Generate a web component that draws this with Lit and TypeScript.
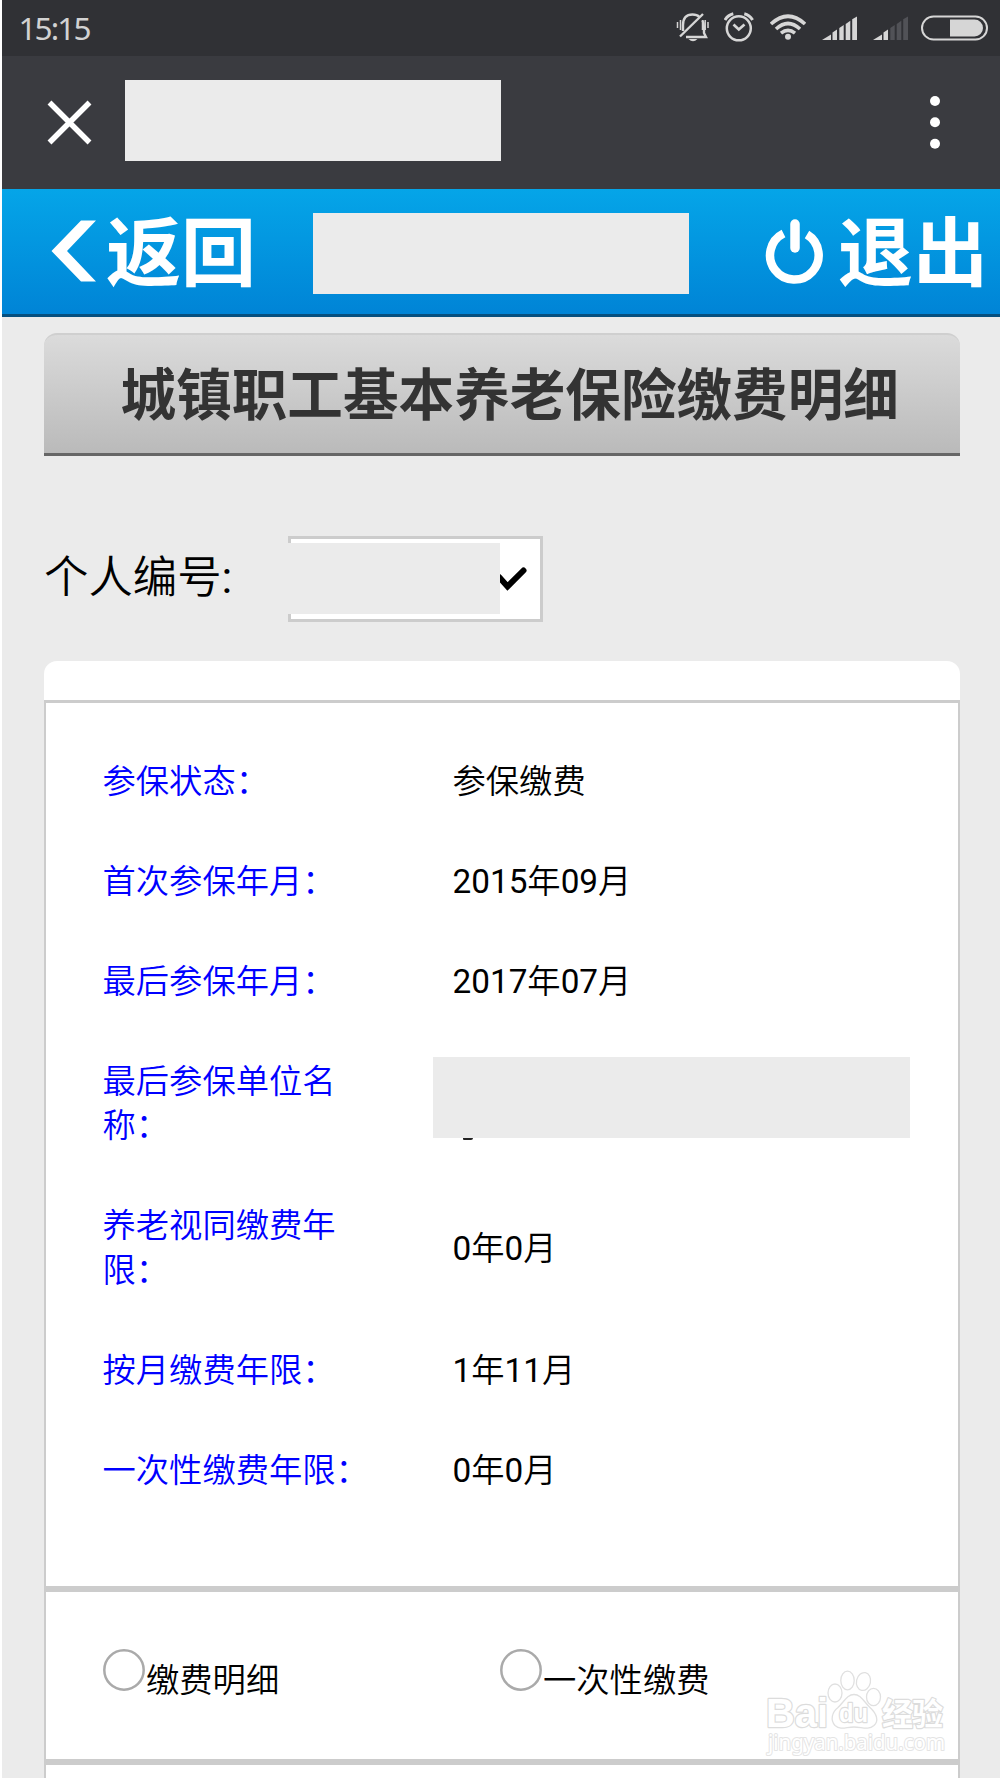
import { LitElement, html, svg, css } from "lit";
import { customElement } from "lit/decorators.js";

type Row = { label: string; value: string; masked?: boolean };

const ROWS: Row[] = [
  { label: "参保状态：", value: "参保缴费" },
  { label: "首次参保年月：", value: "2015年09月" },
  { label: "最后参保年月：", value: "2017年07月" },
  { label: "最后参保单位名称：", value: "", masked: true },
  { label: "养老视同缴费年限：", value: "0年0月" },
  { label: "按月缴费年限：", value: "1年11月" },
  { label: "一次性缴费年限：", value: "0年0月" },
];

// Digits are set one weight heavier than the ideographs around them.
const mixed = (text: string) =>
  text.split(/(\d+)/).filter(Boolean).map((part) => (/\d/.test(part) ? html`<span class="num">${part}</span>` : part));

// Five ascending signal bars; bars past `active` are dimmed.
const signal = (active: number) =>
  ["M0 24L9 18.500V24Z", "M10.500 24V16.500L15 13.500V24Z", "M17.300 24V12L21.700 9V24Z", "M23.700 24V8L28.300 4.700V24Z", "M30.200 24V3.300L35 .500V24Z"].map(
    (d, i) => svg`<path d=${d} fill=${i < active ? "#d6d6d6" : "#515257"}></path>`
  );

@customElement("status-bar")
class StatusBar extends LitElement {
  static styles = css`
    :host { display: flex; align-items: center; height: 55.500px; padding: 0 12px 0 16.500px; background: #303135; color: #d2d2d2; box-sizing: border-box; }
    .time { flex: 1; font: 400 31.500px/55px "Noto Sans", sans-serif; letter-spacing: -1.900px; }
    svg { display: block; flex: none; }
    .mute { margin-right: 15px; }
    .alarm { margin-right: 16px; }
    .wifi { margin-right: 16px; }
    .sig { margin-right: 16px; }
    .sig2 { margin-right: 13px; }
  `;
  render() {
    return html`
      <span class="time">15:15</span>
      <svg class="mute" width="33" height="55" viewBox="676 0 33 55" fill="none" stroke="#d6d6d6" stroke-width="2.400">
        <path d="M683 31V25Q683 14.500 692.500 14.500Q697 14.500 699.500 17M702.500 20.500Q704 23 704 28V33L706 37H686" />
        <path d="M680 36.500L703 14" />
        <path d="M677.500 22V28M680.500 20V30M702.500 20V30M705.200 20V30M708 22V28" stroke-width="1.500" />
        <path d="M688.500 39H697.500Q693 43.500 688.500 39Z" fill="#d6d6d6" stroke="none" />
      </svg>
      <svg class="alarm" width="30" height="55" viewBox="724 0 30 55" fill="none" stroke="#d6d6d6">
        <circle cx="738.800" cy="28.300" r="12" stroke-width="2.500" />
        <path d="M733.500 24.500L738.800 29.500L744.500 24.500" stroke-width="2.700" />
        <path d="M725 20Q728 15 733.300 13.800M752.600 20Q749.600 15 744.300 13.800" stroke-width="3" />
      </svg>
      <svg class="wifi" width="36" height="55" viewBox="770 0 36 55" fill="none" stroke="#d6d6d6" stroke-width="3.600">
        <path d="M771 24Q788 8.500 805 24M776 29Q788 18 800 29M781 33.200Q788 27.500 795 33.200" />
        <circle cx="788" cy="36.800" r="3" fill="#d6d6d6" stroke="none" />
      </svg>
      <svg class="sig" width="35" height="24" viewBox="0 0 35 24">${signal(5)}</svg>
      <svg class="sig2" width="35" height="24" viewBox="0 0 35 24">${signal(2)}</svg>
      <svg width="67" height="26" viewBox="0 0 67 26">
        <rect x="1" y="1.500" width="65" height="23" rx="11.500" fill="none" stroke="#d6d6d6" stroke-width="2" />
        <path d="M29 4.500H53.500A8.500 8.500 0 0 1 53.500 21.500H29Z" fill="#d6d6d6" />
      </svg>
    `;
  }
}

@customElement("baidu-mark")
class BaiduMark extends LitElement {
  static styles = css`
    :host { display: block; }
    svg { display: block; }
    text { paint-order: stroke; fill: #fff; stroke: #dcdcdc; stroke-width: 2.400px; stroke-linejoin: round; font-family: "Liberation Sans", "Noto Sans CJK SC", sans-serif; }
    .brand { font-weight: 700; }
    .url { font-family: "Noto Sans", sans-serif; stroke: #e4e4e4; stroke-width: 2px; }
    .paw { fill: #fff; stroke: #e0e0e0; stroke-width: 1.300; }
  `;
  render() {
    return html`
      <svg width="190" height="94" viewBox="760 1666 190 94">
        <text class="brand" x="766" y="1726.500" font-size="40" textLength="62" lengthAdjust="spacingAndGlyphs">Bai</text>
        <g class="paw">
          <ellipse cx="835" cy="1693" rx="7" ry="9" />
          <ellipse cx="847.500" cy="1680.500" rx="6.700" ry="9.300" />
          <ellipse cx="863.500" cy="1681.500" rx="7" ry="9" transform="rotate(12 863.500 1681.500)" />
          <ellipse cx="873.500" cy="1697" rx="7" ry="8.700" />
          <path d="M854 1694.500C861 1694.500 864 1702 870 1707.500C877 1714 879 1721 874 1725.500C868 1730.500 862 1727 854 1727C846 1727 841 1730.500 835 1725.500C830 1720 832 1712 838 1707.500C844 1702 847 1694.500 854 1694.500Z" />
        </g>
        <text class="brand" x="839" y="1722" font-size="25" textLength="29" lengthAdjust="spacingAndGlyphs">du</text>
        <text class="brand" x="882" y="1724.500" font-size="31" textLength="61">经验</text>
        <text class="url" x="768" y="1750" font-size="21" textLength="177" lengthAdjust="spacingAndGlyphs">jingyan.baidu.com</text>
      </svg>
    `;
  }
}

@customElement("app-root")
class AppRoot extends LitElement {
  static styles = css`
    :host { display: block; height: 1778px; overflow: hidden; padding-left: 2px; background: #fff; box-sizing: border-box; font-family: Roboto, "Noto Sans CJK SC", sans-serif; color: #000; }
    .screen { height: 1778px; overflow: hidden; background: #ebebeb; }
    .mask { background: #ebebeb; flex: none; }
    svg { display: block; flex: none; }
    .titlebar { display: flex; align-items: center; height: 133.500px; padding: 0 60px 0 45px; background: #3a3b40; box-sizing: border-box; }
    .titlebar .mask { width: 376px; height: 81px; margin-left: 33px; margin-top: -3px; }
    .titlebar .more { margin-left: auto; }
    .nav { display: flex; align-items: center; height: 128px; padding: 0 0 0 49px; box-sizing: border-box; background: linear-gradient(#05a5e8, #0084d6); border-bottom: 3px solid #06507f; }
    .nav .mask { width: 376px; height: 81px; margin-top: 4px; }
    .link { display: flex; align-items: center; color: #fff; font: 700 75px/120px "Noto Sans CJK SC", sans-serif; }
    .link span { margin-top: -7px; }
    .back { width: 262px; }
    .back svg { margin-right: 9px; margin-top: -1px; }
    .exit { margin-left: 76px; }
    .exit svg { margin-right: 15px; }
    .heading { display: flex; align-items: center; justify-content: center; margin: 16px 40px 0 41.500px; height: 123px; padding-left: 16px; box-sizing: border-box; border-top: 2px solid #cfcfcf; border-bottom: 3px solid #666; border-radius: 13px 13px 0 0; background: linear-gradient(#dbdbdb, #bababa); color: #333; font: 700 55.600px/80px "Noto Sans CJK SC", sans-serif; }
    .heading span { margin-top: -6px; }
    .person { display: flex; align-items: center; height: 86px; margin: 80px 0 39px 42px; }
    .person label { width: 244px; margin-top: -2px; font: 350 44.400px/60px Roboto, "Noto Sans CJK SC", sans-serif; }
    .colon, .num { font-weight: 400; }
    .select { display: flex; align-items: center; width: 255px; height: 86px; box-sizing: border-box; background: #fff; border: 3px solid #ccc; }
    .select .mask { width: 212px; height: 71px; margin: 0 0 1px -3px; }
    .cap { height: 39px; margin: 0 40px 0 41.500px; background: #fff; border-radius: 13px 13px 0 0; }
    .panel { margin: 0 40px 0 42px; border: 3px solid #ccc; border-bottom: 0; border-left-width: 2px; border-right-width: 2px; background: #fff; }
    .rows { display: flex; flex-direction: column; gap: 55.600px; height: 883px; padding: 57px 0 0 56.500px; box-sizing: border-box; }
    .row { display: flex; align-items: center; font: 350 33.300px/44.400px Roboto, "Noto Sans CJK SC", sans-serif; }
    .label { width: 284px; margin-right: 66px; color: #00f; }
    .company { display: flex; flex-direction: column; margin: -12px 0 0 -19.500px; }
    .company .mask { width: 477px; height: 81px; }
    .company .tail { width: 10px; height: 2px; margin-left: 30px; background: #222; border-radius: 0 0 4px 2px; }
    .options { display: flex; height: 178.500px; border-top: 6px solid #ccc; border-bottom: 6px solid #ccc; padding-left: 57px; box-sizing: border-box; }
    .option { display: flex; align-items: flex-start; width: 397px; padding-top: 57px; box-sizing: border-box; font: 350 33.300px/44.400px Roboto, "Noto Sans CJK SC", sans-serif; }
    .option span { margin: 10px 0 0 1px; }
    .rest { height: 30px; }
    .watermark { position: absolute; left: 760px; top: 1666px; }
  `;

  render() {
    return html`
      <div class="screen">
        <status-bar></status-bar>
        <div class="titlebar">
          <svg width="45" height="45" viewBox="0 0 45 45" stroke="#fff" stroke-width="5.500"><path d="M2.500 2.500L42.500 42.500M42.500 2.500L2.500 42.500" /></svg>
          <div class="mask"></div>
          <svg class="more" width="10" height="53" viewBox="0 0 10 53" fill="#fff"><circle cx="5" cy="5" r="5" /><circle cx="5" cy="26.300" r="5" /><circle cx="5" cy="47.700" r="5" /></svg>
        </div>
        <div class="nav">
          <div class="link back">
            <svg width="46" height="62" viewBox="0 0 46 62" fill="#fff"><path d="M45 .500H30L.500 31L30 61.500H45L16 31Z" /></svg>
            <span>返回</span>
          </div>
          <div class="mask"></div>
          <div class="link exit">
            <svg width="58" height="68" viewBox="766 218 58 68" fill="none" stroke="#fff">
              <path d="M784.500 233.500A24.300 24.300 0 1 0 808 234.500" stroke-width="8.500" />
              <path d="M796 224V248" stroke-width="9.500" stroke-linecap="round" />
            </svg>
            <span>退出</span>
          </div>
        </div>
        <div class="heading"><span>城镇职工基本养老保险缴费明细</span></div>
        <div class="person">
          <label>个人编号<span class="colon">:</span></label>
          <div class="select">
            <div class="mask"></div>
            <svg width="29" height="25" viewBox="0 0 29 25" fill="none" stroke="#000" stroke-width="6"><path d="M-1 10L7.500 19.500L23.500 3.500" stroke-linecap="round" /></svg>
          </div>
        </div>
        <div class="cap"></div>
        <div class="panel">
          <div class="rows">
            ${ROWS.map(
              (r) => html`<div class="row">
                <div class="label">${r.label}</div>
                ${r.masked ? html`<div class="company"><div class="mask"></div><div class="tail"></div></div>` : html`<div>${mixed(r.value)}</div>`}
              </div>`
            )}
          </div>
          <div class="options">
            ${["缴费明细", "一次性缴费"].map(
              (t) => html`<div class="option">
                <svg width="42" height="42" viewBox="0 0 42 42"><circle cx="21" cy="21" r="19.700" fill="#fff" stroke="#aaa" stroke-width="2.500" /></svg>
                <span>${t}</span>
              </div>`
            )}
          </div>
          <div class="rest"></div>
        </div>
      </div>
      <baidu-mark class="watermark"></baidu-mark>
    `;
  }
}
